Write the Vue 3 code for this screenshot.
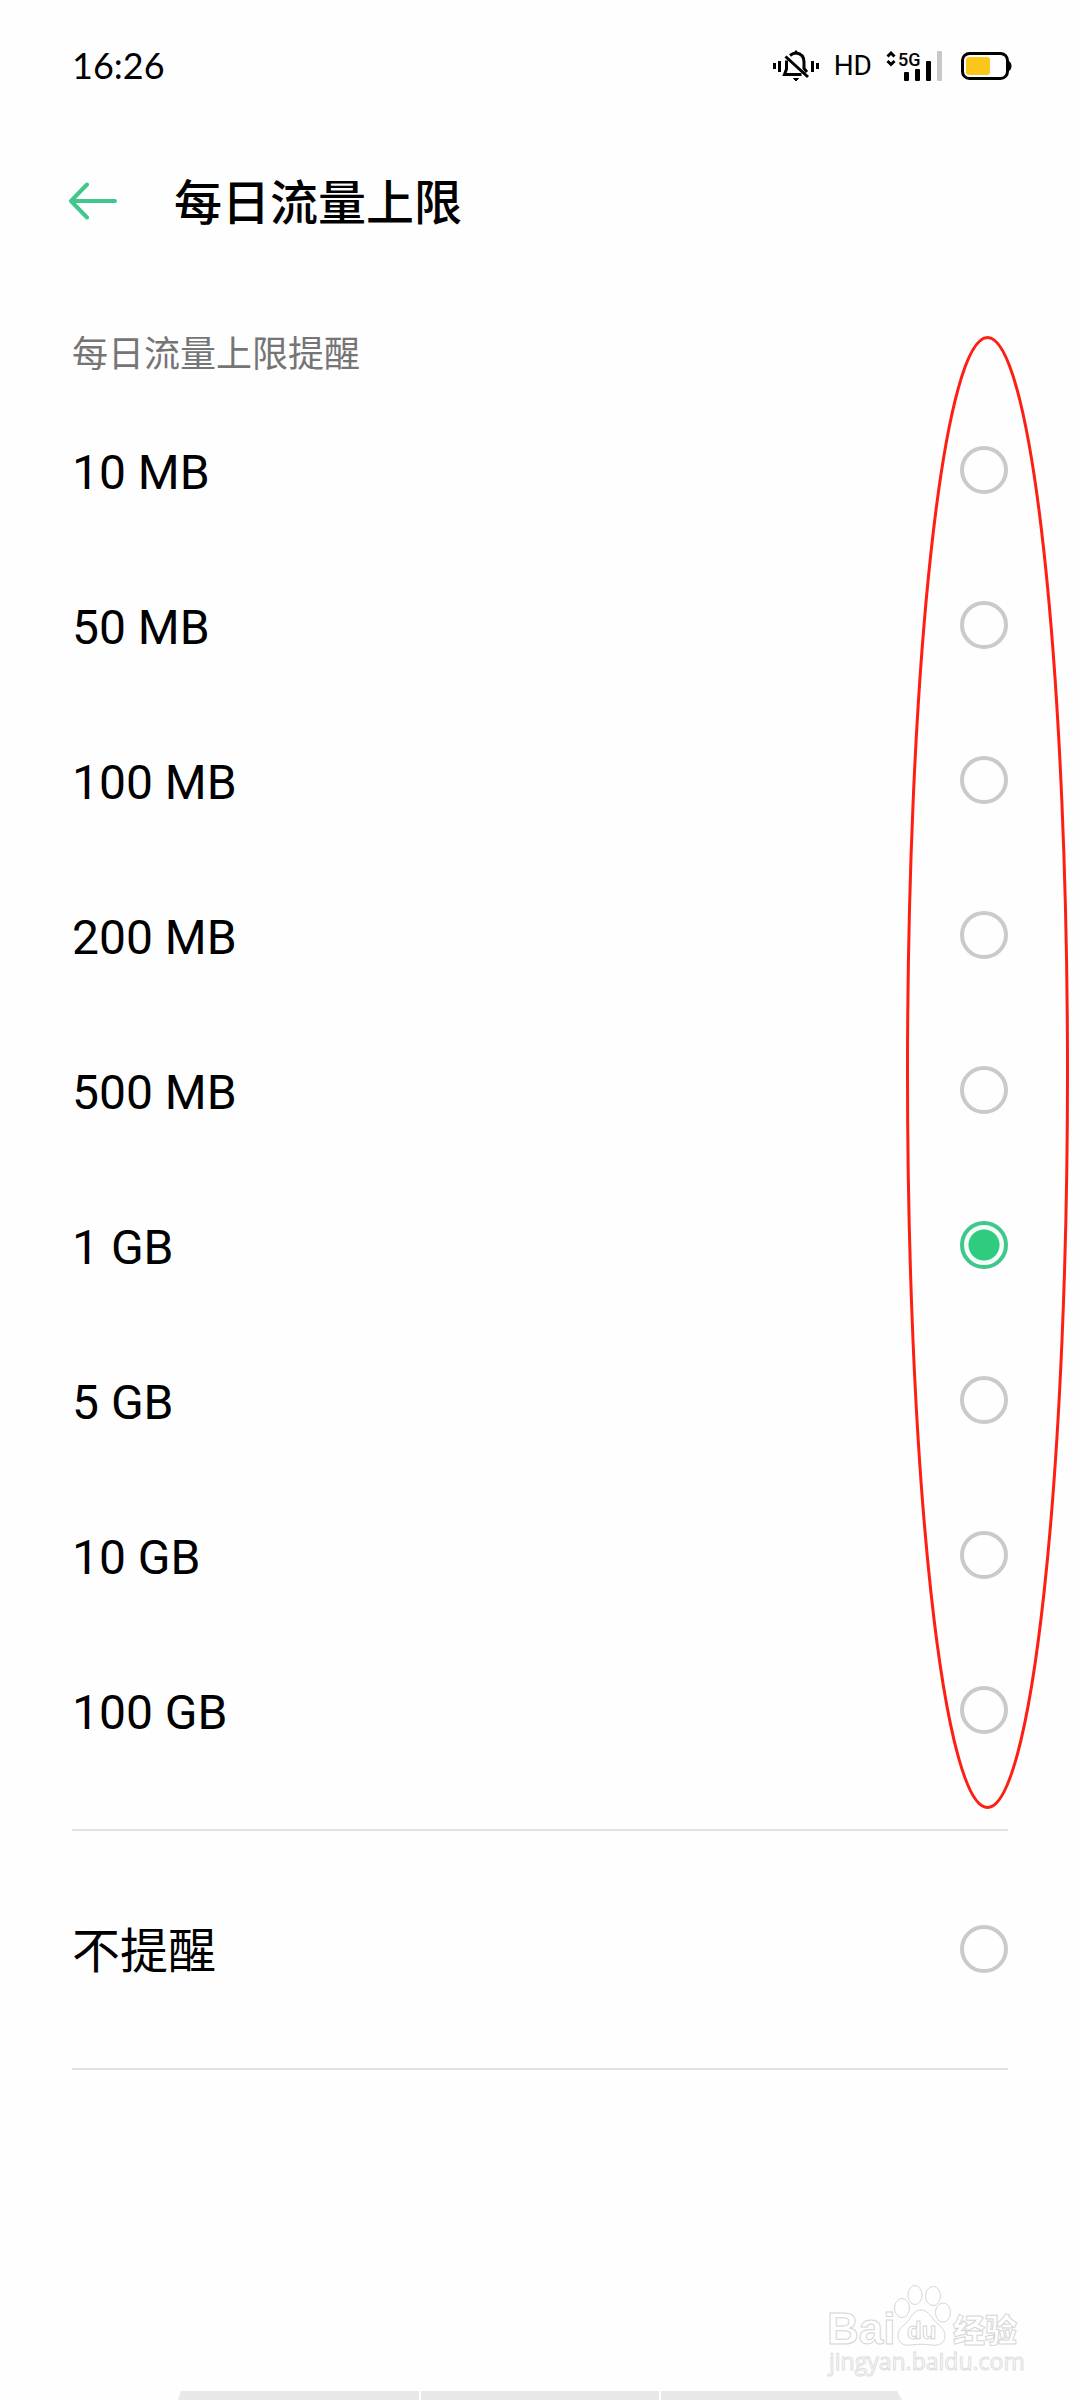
<script setup>
import { ref } from 'vue'

const limits = ['10 MB', '50 MB', '100 MB', '200 MB', '500 MB', '1 GB', '5 GB', '10 GB', '100 GB']
const selected = ref('1 GB')
</script>

<template>
  <div class="page">
    <div class="status">
      <time class="clock">16:26</time>
      <div class="indicators">
        <svg class="bell" width="46" height="32" viewBox="0 0 46 32" fill="none" stroke="#000" aria-label="静音">
          <g stroke-width="3">
            <path d="M1.5 13v6M6.500 11v11M39.500 11v11M44.500 13v6" />
            <path d="M17 5.500Q20 3 23 3Q31 4 31 12V18.500L34 22M13.500 10.500V19L11.500 24.500H28.500M12.500 6.500L35 27" />
          </g>
          <path d="M21 3L23 0.500L25 3zM20.500 28.500h5L23 31z" fill="#000" stroke-width="1" />
        </svg>
        <span class="hd">HD</span>
        <svg class="signal" width="56" height="32" viewBox="0 0 56 32" aria-label="5G">
          <path d="M1.500 6.500L5 3L8.500 6.500M1.500 11L5 14.500L8.500 11" fill="none" stroke="#000" stroke-width="3" />
          <text x="12" y="16" class="net">5G</text>
          <rect x="18" y="22" width="5" height="9" rx="1" />
          <rect x="29" y="19" width="5" height="12" rx="1" />
          <rect x="40" y="11" width="5" height="20" rx="1" />
          <rect x="51" y="1" width="5" height="30" rx="1" fill="#c8c8c8" />
        </svg>
        <svg class="battery" width="51" height="30" viewBox="0 0 51 30" aria-label="电量">
          <rect x="1.500" y="2.500" width="45" height="25" rx="7" fill="none" stroke="#000" stroke-width="3" />
          <path d="M47 9.500Q50.500 11 50.500 15T47 20.500z" />
          <rect x="5" y="6" width="24" height="18" rx="3" fill="#fac61c" />
        </svg>
      </div>
    </div>

    <header class="header">
      <button class="back" type="button" aria-label="返回">
        <svg width="50" height="38" viewBox="0 0 50 38" fill="none" stroke="#40c78b" stroke-width="4" stroke-linecap="round" stroke-linejoin="round">
          <path d="M19 2.500L3 19L19 35.500M3 19H47" />
        </svg>
      </button>
      <h1>每日流量上限</h1>
    </header>

    <main>
      <h2 id="limit-title">每日流量上限提醒</h2>
      <div class="group limits" role="radiogroup" aria-labelledby="limit-title">
        <label v-for="limit in limits" :key="limit" class="option">
          <span>{{ limit }}</span>
          <input v-model="selected" type="radio" name="limit" :value="limit" />
        </label>
        <svg class="marker" viewBox="0 0 163 1473" fill="none" aria-hidden="true">
          <ellipse cx="81.500" cy="736.500" rx="80" ry="735" stroke="#ff1e12" stroke-width="3" />
        </svg>
      </div>
      <div class="group">
        <label class="option">
          <span>不提醒</span>
          <input v-model="selected" type="radio" name="limit" value="none" />
        </label>
      </div>
    </main>

    <footer>
      <svg class="watermark" width="204" height="100" viewBox="0 0 204 100" aria-label="Baidu经验">
        <g class="outlined">
          <text x="3" y="60" class="bai">Bai</text>
          <ellipse cx="78" cy="24" rx="7.500" ry="9.500" />
          <ellipse cx="91" cy="11" rx="7" ry="9.500" />
          <ellipse cx="109" cy="12" rx="7.500" ry="9.500" />
          <ellipse cx="119" cy="28.500" rx="7.500" ry="9.500" />
          <path d="M97 26C91 26 88 31 85 36C80 42 73 45 74 53C75 60 81 62 87 61C94 60 101 60 107 61C114 62 121 60 121 52C121 44 114 41 110 36C106 31 103 26 97 26z" />
          <text x="83" y="55" class="du">du</text>
          <text x="129" y="58" class="jy">经验</text>
          <text x="5" y="86" class="url">jingyan.baidu.com</text>
        </g>
      </svg>
      <div class="dock"><i></i><i></i><i></i></div>
    </footer>
  </div>
</template>

<style>
body {
  background: #fefefe;
}
</style>

<style scoped>
.page {
  display: flex;
  flex-direction: column;
  min-height: 100vh;
  color: #000;
  font-family: Roboto, "Noto Sans CJK SC", sans-serif;
}

.status {
  display: flex;
  align-items: center;
  justify-content: space-between;
  height: 132px;
  padding: 0 68px 0 72px;
}

.clock {
  padding-bottom: 2px;
  font: 36px/48px Lato, sans-serif;
}

.indicators {
  display: flex;
  align-items: center;
}

.hd {
  margin: 0 14px 0 15px;
  font-size: 28px;
  line-height: 32px;
}

.signal {
  overflow: visible;
}

.net {
  font: 500 18px Roboto, sans-serif;
}

.battery {
  margin-left: 19px;
}

.header {
  display: flex;
  align-items: center;
  height: 138px;
  padding: 0 68px;
}

.back {
  display: flex;
  margin: 0 56px 0 0;
  padding: 0;
  border: 0;
  background: none;
}

h1 {
  margin: 0;
  padding-bottom: 4px;
  font: 500 48px/64px "Noto Sans CJK SC", sans-serif;
}

main {
  padding: 0 72px;
}

h2 {
  margin: 53px 0 0;
  color: #757575;
  font: 36px/56px "Noto Sans CJK SC", sans-serif;
}

.group {
  position: relative;
  display: grid;
  gap: 107px;
  padding: 94px 0 95px;
  border-bottom: 2px solid #e2e2e2;
}

.limits {
  padding-top: 67px;
}

.option {
  display: flex;
  align-items: center;
  justify-content: space-between;
  height: 48px;
  font-size: 48px;
  line-height: 48px;
}

.option span {
  padding-top: 6px;
}

input {
  appearance: none;
  width: 48px;
  height: 48px;
  margin: 0;
  border: 4px solid #cacaca;
  border-radius: 50%;
}

input:checked {
  border-color: #40c78b;
  background: radial-gradient(circle, #2fcb7f 15px, #f4fff9 16px);
}

.marker {
  position: absolute;
  top: -43px;
  right: -61px;
  width: 163px;
  height: 1473px;
  pointer-events: none;
}

footer {
  display: flex;
  flex-direction: column;
  margin-top: auto;
}

.watermark {
  align-self: flex-end;
  margin-right: 52px;
  overflow: visible;
}

.outlined {
  fill: #fff;
  stroke: #d6d6d6;
  stroke-width: 1px;
}

.bai {
  font: bold 44px "Liberation Sans", sans-serif;
}

.du {
  font: bold 24px "Liberation Sans", sans-serif;
}

.jy {
  font: 900 32px "Noto Sans CJK SC", sans-serif;
}

.url {
  font: 23px "Open Sans", sans-serif;
  stroke: #dedede;
}

.dock {
  display: grid;
  grid-template-columns: 240fr 238fr 240fr;
  gap: 2px;
  height: 9px;
  margin: 7px 178px 0;
  clip-path: polygon(3px 0, calc(100% - 5px) 0, 100% 100%, 0 100%);
}

.dock i {
  background: #e8e8e8;
}
</style>
